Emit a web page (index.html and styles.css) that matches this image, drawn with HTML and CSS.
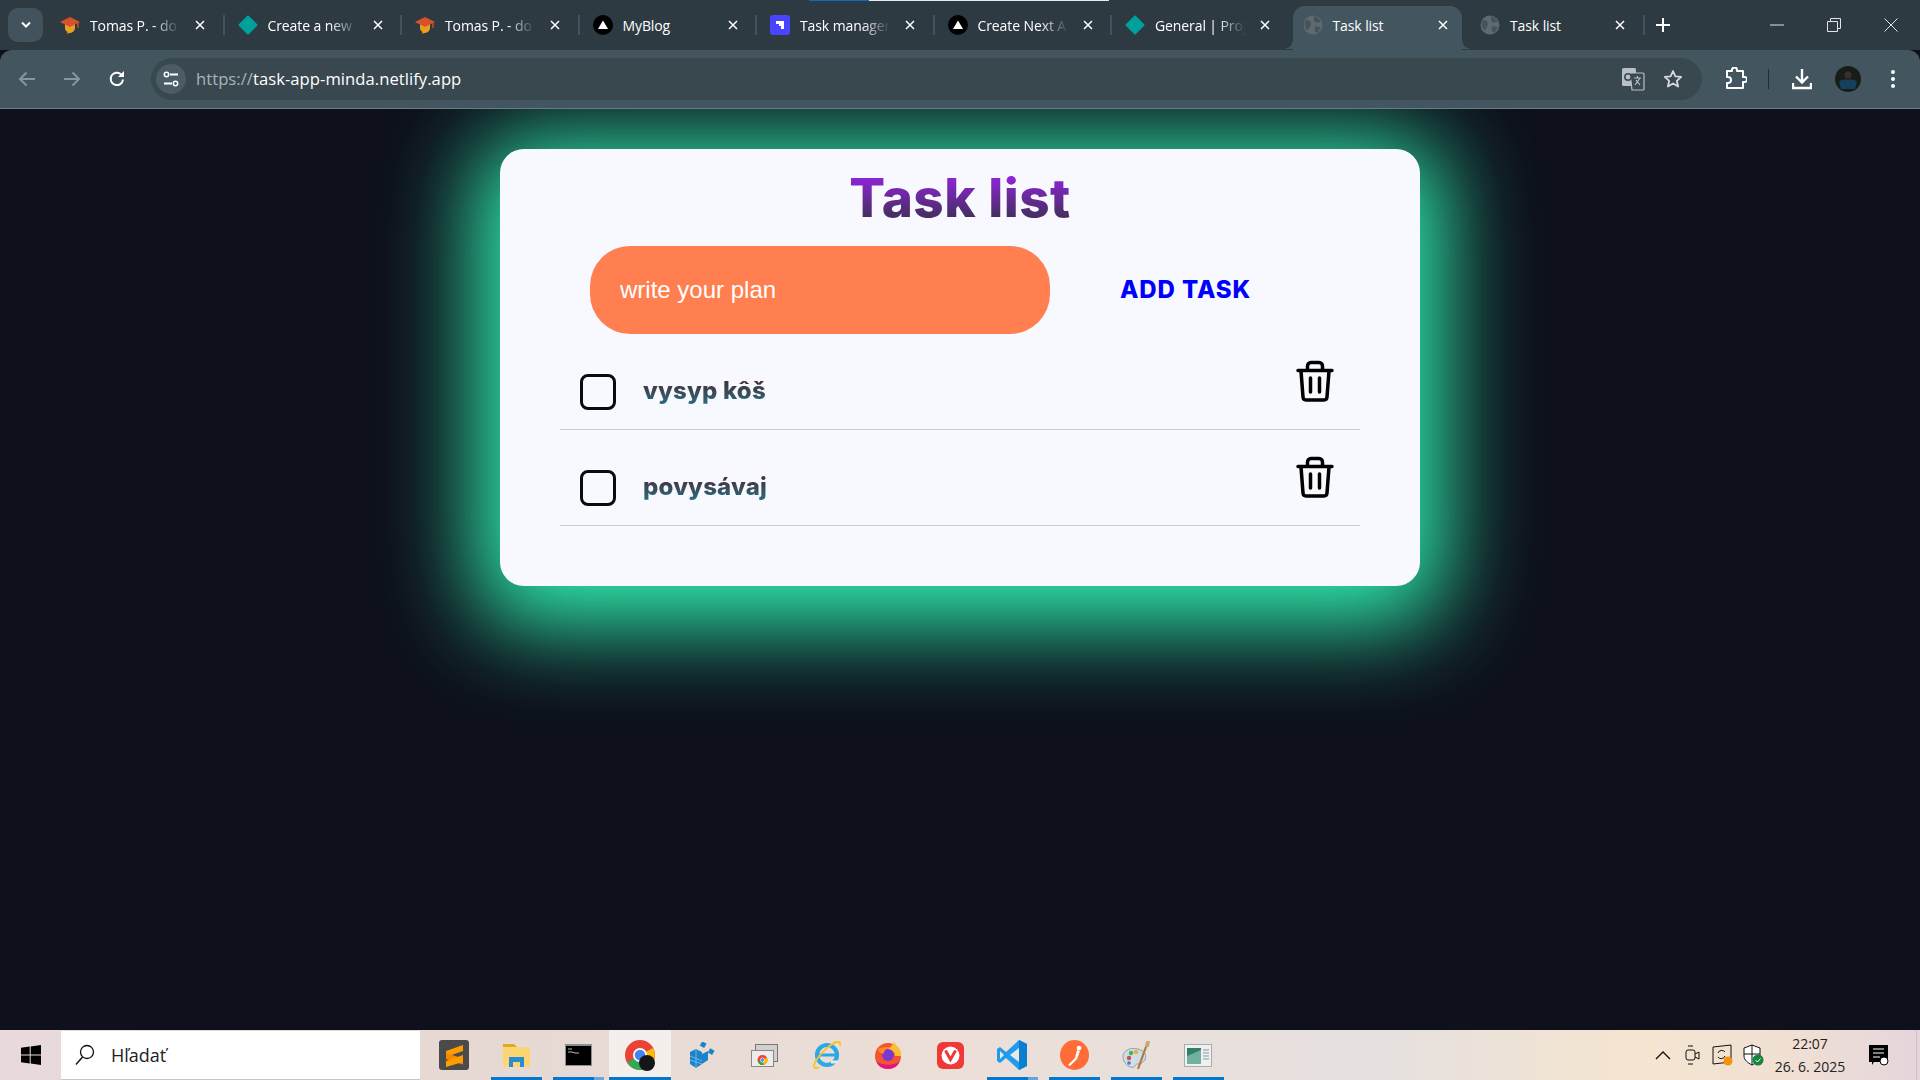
FILE: index.html
```html
<!DOCTYPE html>
<html lang="en">
<head>
    <meta charset="UTF-8">
    <meta name="viewport" content="width=device-width, initial-scale=1.0">
    <title>Task list</title>
    <link rel="stylesheet" href="styles.css">
</head>
<body>
    <svg class="icon-defs" width="0" height="0">
        <symbol id="fav-cap" viewBox="0 0 20 20">
            <path d="M5 9h10v4c0 3-3 5-6 5l-2 1 .5-2C5.500 16 5 14 5 13z" fill="#e8a020"/>
            <path d="M0 7l10-5 10 5-10 5z" fill="#d9512c"/>
            <path d="M18 8v5" stroke="#d9512c" stroke-width="1.300"/>
        </symbol>
        <symbol id="fav-tri" viewBox="0 0 20 20">
            <circle cx="10" cy="10" r="10" fill="#000"/>
            <path d="M10 5.500l5 8.500H5z" fill="#fff"/>
        </symbol>
        <symbol id="fav-globe" viewBox="0 0 18 18">
            <circle cx="9" cy="9" r="8.500" fill="#5f6a70"/>
            <path d="M2 5c3-1 4 0 5 2s-1 3-1 5l-2 2C2 12 1 8 2 5zM10 1c2 1 5 2 6 5l-4 1c-2-1-3-3-2-6zM11 10l5 1-3 5c-2 0-3-1-2-6z" fill="#45535b"/>
        </symbol>
        <symbol id="icon-close" viewBox="0 0 10 10">
            <path d="M1 1l8 8M9 1l-8 8" stroke="#fff" stroke-width="1.500" fill="none"/>
        </symbol>
        <symbol id="icon-trash" viewBox="0 0 38 42">
            <path d="M2 10.500h34M5 11l2 26c.1 2 1.300 3 3 3h18c1.700 0 2.900-1 3-3l2-26M11.500 10V6c0-2 1.500-3.500 3.500-3.500h8c2 0 3.500 1.500 3.500 3.500v4" fill="none" stroke="#000" stroke-width="3.500" stroke-linecap="round" stroke-linejoin="round"/>
            <path d="M14.500 18v14M23.500 18v14" fill="none" stroke="#000" stroke-width="3.500" stroke-linecap="round"/>
        </symbol>
    </svg>

    <header class="tabstrip">
        <span class="bar-progress"></span>
        <button class="tab-search">
            <svg width="12" height="8" viewBox="0 0 12 8"><path d="M2 1.500l4 4 4-4" fill="none" stroke="#fff" stroke-width="2"/></svg>
        </button>
        <div class="tab">
            <svg class="favicon"><use href="#fav-cap"/></svg>
            <span class="tab-title tab-fade">Tomas P. - do</span>
            <svg class="tab-close"><use href="#icon-close"/></svg>
        </div>
        <div class="tab">
            <span class="fav-diamond"></span>
            <span class="tab-title tab-fade">Create a new</span>
            <svg class="tab-close"><use href="#icon-close"/></svg>
        </div>
        <div class="tab">
            <svg class="favicon"><use href="#fav-cap"/></svg>
            <span class="tab-title tab-fade">Tomas P. - do</span>
            <svg class="tab-close"><use href="#icon-close"/></svg>
        </div>
        <div class="tab">
            <svg class="favicon"><use href="#fav-tri"/></svg>
            <span class="tab-title">MyBlog</span>
            <svg class="tab-close"><use href="#icon-close"/></svg>
        </div>
        <div class="tab">
            <svg class="favicon" viewBox="0 0 20 20">
                <rect width="20" height="20" rx="3" fill="#4945ff"/>
                <path d="M6 6h8v8h-3v-3l-2 0V9H6z" fill="#fff"/>
            </svg>
            <span class="tab-title tab-fade">Task manager</span>
            <svg class="tab-close"><use href="#icon-close"/></svg>
        </div>
        <div class="tab">
            <svg class="favicon"><use href="#fav-tri"/></svg>
            <span class="tab-title tab-fade">Create Next A</span>
            <svg class="tab-close"><use href="#icon-close"/></svg>
        </div>
        <div class="tab tab-noline">
            <span class="fav-diamond"></span>
            <span class="tab-title tab-fade">General | Proj</span>
            <svg class="tab-close"><use href="#icon-close"/></svg>
        </div>
        <div class="tab tab-active">
            <svg class="favicon"><use href="#fav-globe"/></svg>
            <span class="tab-title">Task list</span>
            <svg class="tab-close"><use href="#icon-close"/></svg>
        </div>
        <div class="tab">
            <svg class="favicon"><use href="#fav-globe"/></svg>
            <span class="tab-title">Task list</span>
            <svg class="tab-close"><use href="#icon-close"/></svg>
        </div>
        <svg class="tab-new" width="14" height="14" viewBox="0 0 14 14"><path d="M7 0v14M0 7h14" stroke="#fff" stroke-width="2"/></svg>
        <div class="window-controls">
            <svg width="14" height="14" viewBox="0 0 14 14"><path d="M0 7h14" stroke="#dfe3e5"/></svg>
            <svg width="14" height="14" viewBox="0 0 14 14"><path d="M.5 3.500h10v10H.500zM3.500 3.500V.5h10v10h-3" fill="none" stroke="#dfe3e5"/></svg>
            <svg width="14" height="14" viewBox="0 0 14 14"><path d="M.5.5l13 13M13.500.5l-13 13" stroke="#dfe3e5"/></svg>
        </div>
    </header>

    <nav class="toolbar">
        <div class="nav-buttons">
            <svg width="18" height="16" viewBox="0 0 18 16"><path d="M17 8H2M8.500 1.500L2 8l6.500 6.500" fill="none" stroke="#87959d" stroke-width="2"/></svg>
            <svg width="18" height="16" viewBox="0 0 18 16"><path d="M1 8h15M9.500 1.500L16 8l-6.500 6.500" fill="none" stroke="#87959d" stroke-width="2"/></svg>
            <svg width="18" height="18" viewBox="0 0 18 18"><path d="M15 9.500A6.200 6.200 0 1 1 13 4.300L15 6" fill="none" stroke="#fff" stroke-width="2"/><path d="M16 1v6h-6z" fill="#fff"/></svg>
        </div>
        <div class="omnibox">
            <span class="site-settings">
                <svg width="16" height="16" viewBox="0 0 16 16"><path d="M7 3.500h8M1 12.500h8" stroke="#fff" stroke-width="1.800"/><circle cx="3.500" cy="3.500" r="2.200" fill="none" stroke="#fff" stroke-width="1.500"/><circle cx="12.500" cy="12.500" r="2.200" fill="none" stroke="#fff" stroke-width="1.500"/></svg>
            </span>
            <span class="url"><span class="url-scheme">https://</span>task-app-minda.netlify.app</span>
            <svg class="omni-translate" width="24" height="24" viewBox="0 0 24 24">
                <rect x="1" y="1" width="14" height="18" rx="1.500" fill="#b9c0c4"/>
                <path d="M9 6h13a1 1 0 0 1 1 1v15a1 1 0 0 1-1 1H11z" fill="#39474f" stroke="#b9c0c4" stroke-width="1.200"/>
                <circle cx="7" cy="10" r="3.200" fill="none" stroke="#39474f" stroke-width="1.500"/>
                <path d="M13 11h7M16.500 9v2M14 18l5-7M15 13l4 5" stroke="#b9c0c4" stroke-width="1.200" fill="none"/>
            </svg>
            <svg class="omni-star" width="20" height="20" viewBox="0 0 20 20"><path d="M10 2l2.400 5.300 5.800.6-4.400 3.900 1.300 5.700-5.100-3-5.100 3 1.300-5.700L1.800 7.900l5.800-.6z" fill="none" stroke="#d5dadd" stroke-width="1.800" stroke-linejoin="round"/></svg>
        </div>
        <div class="toolbar-actions">
            <svg class="act-ext" width="22" height="24" viewBox="0 0 22 24"><path d="M2 4h5V3a2.500 2.500 0 0 1 5 0v1h6v6h1.500a2.500 2.500 0 0 1 0 5H18v6H2v-5h1a3 3 0 0 0 0-6H2z" fill="none" stroke="#fff" stroke-width="2" stroke-linejoin="round"/></svg>
            <span class="act-sep"></span>
            <svg class="act-down" width="20" height="22" viewBox="0 0 20 22"><path d="M10 1v13M4 8.500l6 6 6-6" fill="none" stroke="#fff" stroke-width="2.400"/><path d="M1 15v5h18v-5" fill="none" stroke="#fff" stroke-width="2.400"/></svg>
            <svg class="act-avatar" width="26" height="26" viewBox="0 0 26 26">
                <circle cx="13" cy="13" r="13" fill="#171d17"/>
                <circle cx="13" cy="9" r="3.500" fill="#3a2e28"/>
                <path d="M4 15c3-2 15-2 18 0l-2 8H6z" fill="#17405e"/>
            </svg>
            <svg class="act-menu" width="6" height="20" viewBox="0 0 6 20"><circle cx="3" cy="3" r="2" fill="#fff"/><circle cx="3" cy="10" r="2" fill="#fff"/><circle cx="3" cy="17" r="2" fill="#fff"/></svg>
        </div>
    </nav>

    <main class="page">
        <section class="card">
            <h1 class="card-title"><span>Task list</span></h1>
            <form class="task-form">
                <input class="task-input" type="text" placeholder="write your plan">
                <button class="task-add" type="button">ADD TASK</button>
            </form>
            <ul class="task-list">
                <li class="task">
                    <input class="task-check" type="checkbox">
                    <span class="task-text">vysyp kôš</span>
                    <svg class="task-delete"><use href="#icon-trash"/></svg>
                </li>
                <li class="task">
                    <input class="task-check" type="checkbox">
                    <span class="task-text">povysávaj</span>
                    <svg class="task-delete"><use href="#icon-trash"/></svg>
                </li>
            </ul>
        </section>
    </main>

    <footer class="taskbar">
        <span class="start">
            <svg width="20" height="20" viewBox="0 0 20 20"><path d="M0 2.800L8.700 1.500v8H0zM9.700 1.400L20 0v9.500H9.700zM0 10.500h8.700v8L0 17.200zM9.700 10.500H20V20L9.700 18.600z" fill="#000"/></svg>
        </span>
        <div class="search">
            <svg width="20" height="22" viewBox="0 0 20 22"><circle cx="12" cy="8" r="6.500" fill="none" stroke="#111" stroke-width="1.300"/><path d="M7.500 13L1 20.500" stroke="#111" stroke-width="1.400"/></svg>
            <span>Hľadať</span>
        </div>
        <div class="task-apps">
            <span class="app">
                <svg width="30" height="30" viewBox="0 0 30 30"><rect width="30" height="30" rx="3" fill="#4a4a4a"/><path d="M24 5L7 11v6l17-6z" fill="#ff9d00"/><path d="M7 13l17 5.500v6L7 19z" fill="#f58a00"/><path d="M24 15v7l-17 5v-6z" fill="#ff9d00"/></svg>
            </span>
            <span class="app app-open">
                <svg width="27" height="23" viewBox="0 0 27 23"><path d="M0 0h11l3 3H0z" fill="#e3a81c"/><rect y="3" width="27" height="20" fill="#fcd672"/><rect x="6" y="13" width="15" height="10" fill="#2a8dd4"/><rect x="10" y="18" width="7" height="5" fill="#fcd672"/></svg>
            </span>
            <span class="app app-open app-split">
                <svg width="27" height="22" viewBox="0 0 27 22"><rect width="27" height="22" fill="#8d8f90"/><rect x="1" y="2" width="25" height="19" fill="#000"/><path d="M3 5h4M3 8h4l3 1h4" stroke="#bbb" fill="none"/></svg>
            </span>
            <span class="app app-open app-active">
                <svg width="34" height="34" viewBox="-2 -2 34 34">
                    <circle cx="15" cy="15" r="15" fill="#ea4335"/>
                    <path d="M15 15L28 8a15 15 0 0 1-9 21.500z" fill="#fbbc05"/>
                    <path d="M15 15l4 14.500A15 15 0 0 1 2 22.500z" fill="#34a853"/>
                    <circle cx="15" cy="15" r="7" fill="#fff"/>
                    <circle cx="15" cy="15" r="5.300" fill="#4285f4"/>
                    <circle cx="22" cy="23" r="8" fill="#14161a"/>
                </svg>
            </span>
            <span class="app">
                <svg width="26" height="27" viewBox="0 0 26 27"><path d="M1 10l6-3 6 3v12l-6 4-6-4zM13 12l6-3v9l-6 4z" fill="#1b83c9"/><path d="M7 7v19M1 14l12 5M1 18l12 4" stroke="#7cc4ee" stroke-width=".8"/><rect x="12" y="0" width="5" height="5" fill="#1b83c9" transform="rotate(30 14 2)"/><rect x="20" y="7" width="5" height="5" fill="#1b83c9" transform="rotate(30 22 9)"/></svg>
            </span>
            <span class="app">
                <svg width="27" height="23" viewBox="0 0 27 23"><rect x="4.500" y=".5" width="22" height="17" fill="#d0d0d0" stroke="#777"/><rect x=".5" y="6.500" width="22" height="16" fill="#ececec" stroke="#888"/><circle cx="11.500" cy="16" r="5" fill="#ea4335"/><path d="M11.500 16l4.500-2.500a5 5 0 0 1-3.500 7.400z" fill="#fbbc05"/><path d="M11.500 16l1 5A5 5 0 0 1 7 18z" fill="#34a853"/><circle cx="11.500" cy="16" r="2" fill="#4285f4" stroke="#fff" stroke-width=".7"/></svg>
            </span>
            <span class="app">
                <svg width="29" height="28" viewBox="0 0 29 28"><circle cx="15" cy="14" r="10" fill="none" stroke="#2aa8e8" stroke-width="4.200"/><path d="M7 12.500h16v3H7z" fill="#2aa8e8"/><path d="M19 19.500h7v3h-7z" fill="#efe7df"/><path d="M28 1C22-1 6 13 2 24c-1 3 2 4 5 2" fill="none" stroke="#f5c52c" stroke-width="1.800"/><path d="M21 2c4-2 8-2 7 3" fill="none" stroke="#f5c52c" stroke-width="1.800"/></svg>
            </span>
            <span class="app">
                <svg width="28" height="28" viewBox="0 0 28 28"><circle cx="14" cy="15" r="13" fill="#f2542d"/><path d="M14 28A13 13 0 0 1 2 20c5 5 19 5 24 0a13 13 0 0 1-12 8z" fill="#e31587"/><path d="M20 0c0 4 8 7 7 15h-6c0-5-4-6-8-6 2-3 7-5 7-9z" fill="#ffbd2e"/><circle cx="14" cy="14" r="6" fill="#7a37d4"/><path d="M4 8c4-2 10-3 14-1-5 0-8 2-8 5 0 1-5 1-6-4z" fill="#ff8a1f"/></svg>
            </span>
            <span class="app">
                <svg width="27" height="27" viewBox="0 0 27 27"><rect width="27" height="27" rx="6" fill="#ef3939"/><circle cx="13.500" cy="13.500" r="9" fill="#fff"/><path d="M9 9.500l4.500 8 4.500-8" fill="none" stroke="#ef3939" stroke-width="3" stroke-linecap="round"/></svg>
            </span>
            <span class="app app-open app-split">
                <svg width="30" height="30" viewBox="0 0 30 30"><path d="M22 0l8 4v22l-8 4-13-12-6 5-3-2v-12l3-2 6 5z" fill="#1f9cf0"/><path d="M22 0l8 4v22l-8 4z" fill="#0a7fd0"/><path d="M22 8v14l-9-7z" fill="#efe7df"/><path d="M3 11v8l4-4z" fill="#efe7df"/></svg>
            </span>
            <span class="app app-open">
                <svg width="29" height="30" viewBox="0 0 29 30"><ellipse cx="14.500" cy="15" rx="14.500" ry="15" fill="#ff6c37"/><circle cx="19" cy="8" r="2.300" fill="#fff"/><path d="M17 10l-2 8-7 7 2 1 7-7 3-8z" fill="#fff"/></svg>
            </span>
            <span class="app app-open">
                <svg width="30" height="29" viewBox="0 0 30 29"><path d="M2 16C2 9 10 6 17 8s10 7 6 12-7 1-9 5-12-1-12-9z" fill="#cfdde6" stroke="#8da4b3"/><circle cx="8" cy="17" r="2.200" fill="#d94a4a"/><circle cx="10" cy="12" r="2.200" fill="#4fae4f"/><circle cx="15" cy="11" r="2.200" fill="#e6b52f"/><circle cx="8" cy="22" r="1.800" fill="#3a7fd0"/><path d="M26 3l-9 25" stroke="#b57a3a" stroke-width="2.200"/><path d="M25 0h4l-1 6h-4z" fill="#c8a878"/></svg>
            </span>
            <span class="app app-open">
                <svg width="28" height="23" viewBox="0 0 28 23"><rect x=".5" y=".5" width="27" height="22" fill="#eef0f1" stroke="#a8acae"/><rect x="3" y="4" width="14" height="16" fill="#2f8067"/><path d="M3 12l14-6v14H3z" fill="#6fb0a0"/><path d="M19 6h6M19 9h6M19 12h6M19 15h6" stroke="#90979b"/></svg>
            </span>
        </div>
        <div class="tray">
            <svg width="16" height="10" viewBox="0 0 16 10"><path d="M1 9l7-7 7 7" fill="none" stroke="#111" stroke-width="1.300"/></svg>
            <svg width="16" height="20" viewBox="0 0 16 20"><rect x="1" y="5" width="9" height="10" rx="2" fill="none" stroke="#111"/><path d="M10 9l4-2v7l-4-2M3 1h5M3 19h5" fill="none" stroke="#111"/></svg>
            <svg width="22" height="22" viewBox="0 0 22 22"><path d="M1 3l18-2v17l-18 2z" fill="none" stroke="#111"/><path d="M6 9a4 4 0 0 1 7-1M13 12a4 4 0 0 1-7 1" fill="none" stroke="#111"/><circle cx="16" cy="17" r="4.500" fill="#f7920f"/></svg>
            <svg width="20" height="22" viewBox="0 0 20 22"><path d="M9 1l8 3v8c0 4-4 7-8 9-4-2-8-5-8-9V4z" fill="#fff" stroke="#111"/><path d="M9 1v20M1 10h16" stroke="#111"/><circle cx="15" cy="16" r="5.500" fill="#14873f"/><path d="M12.500 16l2 2 3-3.500" fill="none" stroke="#fff"/></svg>
        </div>
        <div class="clock">
            <span>22:07</span>
            <span>26. 6. 2025</span>
        </div>
        <svg class="notify" width="22" height="22" viewBox="0 0 22 22"><path d="M1 1h19v17H6l-2 3v-3H1z" fill="#000"/><path d="M5 5h11M5 9h11M5 13h7" stroke="#fff"/><circle cx="16" cy="17" r="4" fill="#fff" stroke="#000"/></svg>
        <span class="show-desktop"></span>
    </footer>
</body>
</html>
```

FILE: styles.css
```css
* {
    box-sizing: border-box;
}
html, body {
    height: 100%;
}
body {
    margin: 0;
    display: flex;
    flex-direction: column;
    height: 100vh;
    overflow: hidden;
    background-color: #0e101b;
    font-family: "Open Sans", "Noto Sans", Arial, sans-serif;
}
.icon-defs {
    position: absolute;
}

/* browser tabs */
.tabstrip {
    position: relative;
    z-index: 2;
    display: flex;
    align-items: center;
    flex: none;
    height: 50px;
    background-color: #2e3a42;
    padding-left: 8px;
}
.bar-progress {
    position: absolute;
    top: 0;
    left: 809px;
    width: 300px;
    height: 1px;
    background: linear-gradient(90deg, #0a6cc8 20%, #e8e8e8 20%);
}
.tab-search {
    flex: none;
    display: flex;
    align-items: center;
    justify-content: center;
    width: 35px;
    height: 34px;
    margin-right: 4px;
    border: none;
    border-radius: 10px;
    background-color: #43535d;
    padding: 0;
}
.tab {
    position: relative;
    flex: none;
    display: flex;
    align-items: center;
    width: 177.500px;
    height: 34px;
    padding-left: 13px;
    color: #fff;
    font-size: 14px;
}
.tab::after {
    content: '';
    position: absolute;
    right: 0;
    top: 7px;
    width: 2px;
    height: 20px;
    background-color: #43535d;
}
.tab-noline::after {
    display: none;
}
.tab-active::before {
    content: '';
    position: absolute;
    z-index: -1;
    left: 3px;
    right: 5px;
    top: -2px;
    height: 45px;
    border-radius: 12px 12px 0 0;
    background-color: #435660;
}
/* the little flares at the foot of the open tab */
.tab-active::after {
    z-index: -1;
    left: -6px;
    right: -4px;
    top: 32px;
    width: auto;
    height: 9px;
    background:
        radial-gradient(circle at 0 0, transparent 8.500px, #435660 9px) left bottom / 9px 9px no-repeat,
        radial-gradient(circle at 100% 0, transparent 8.500px, #435660 9px) right bottom / 9px 9px no-repeat;
}
.favicon {
    flex: none;
    width: 20px;
    height: 20px;
}
.fav-diamond {
    flex: none;
    width: 14px;
    height: 14px;
    margin: 0 3px;
    background-color: #00a09d;
    transform: rotate(45deg);
    border-radius: 1px;
}
.tab-title {
    flex: none;
    width: 95px;
    margin-left: 10px;
    white-space: nowrap;
    letter-spacing: -0.100px;
}
.tab-fade {
    -webkit-mask-image: linear-gradient(90deg, #000 65%, transparent 95%);
    mask-image: linear-gradient(90deg, #000 65%, transparent 95%);
}
.tab-close {
    flex: none;
    width: 10px;
    height: 10px;
    margin-left: 10px;
}
.tab-new {
    flex: none;
    margin-left: 11px;
}
.window-controls {
    display: flex;
    align-items: center;
    gap: 43px;
    margin-left: auto;
    padding-right: 22px;
}

/* toolbar */
.toolbar {
    position: relative;
    z-index: 2;
    flex: none;
    display: flex;
    align-items: center;
    height: 59px;
    padding: 0 0 1px 0;
    border-bottom: 1px solid #6a7b84;
    border-radius: 12px 12px 0 0;
    background-color: #435660;
}
.nav-buttons {
    flex: none;
    display: flex;
    align-items: center;
    gap: 27px;
    width: 151px;
    padding-left: 18px;
}
.omnibox {
    flex: none;
    display: flex;
    align-items: center;
    width: 1551px;
    height: 42px;
    padding-left: 5px;
    border-radius: 21px;
    background-color: #39474f;
}
.site-settings {
    flex: none;
    display: flex;
    align-items: center;
    justify-content: center;
    width: 30px;
    height: 30px;
    border-radius: 50%;
    background-color: #4a5c66;
}
.url {
    margin-left: 10px;
    color: #fff;
    font-size: 16.600px;
    letter-spacing: 0.050px;
}
.url-scheme {
    color: #aab4b9;
}
.omni-translate {
    margin-left: auto;
}
.omni-star {
    margin: 0 19px 0 18px;
}
.toolbar-actions {
    flex: 1;
    display: flex;
    align-items: center;
    padding-left: 23px;
}
.act-sep {
    width: 1px;
    height: 20px;
    margin: 0 0 0 21px;
    background-color: #222c32;
}
.act-down {
    margin-left: 23px;
}
.act-avatar {
    margin-left: 23px;
}
.act-menu {
    margin-left: 29px;
}

/* page */
.page {
    flex: 1;
    min-height: 0;
    padding-top: 40px;
    overflow: hidden;
}
.card {
    width: 920px;
    height: 437px;
    margin: 0 auto;
    padding: 0 60px;
    border-radius: 24px;
    background-color: #f8f9ff;
    box-shadow: 0 15px 90px 25px #2ff0b0;
}
.card-title {
    margin: 0;
    padding-top: 13px;
    height: 97px;
    text-align: center;
    font-family: Inter, "Open Sans", sans-serif;
    font-size: 53px;
    font-weight: 800;
    letter-spacing: 0.500px;
    line-height: 72px;
}
.card-title span {
    background: linear-gradient(180deg, #9124dc 15%, #3f2f55 85%);
    -webkit-background-clip: text;
    background-clip: text;
    color: transparent;
}
.task-form {
    display: flex;
    align-items: center;
    padding-left: 30px;
}
.task-input {
    flex: none;
    width: 460px;
    height: 88px;
    padding: 0 30px;
    border: none;
    outline: none;
    border-radius: 40px;
    background-color: #ff7f50;
    color: #fff;
    font-family: "Liberation Sans", Arial, sans-serif;
    font-size: 24px;
}
.task-input::placeholder {
    color: #fff;
    opacity: 1;
}
.task-add {
    margin-left: 70px;
    padding: 0;
    border: none;
    background: none;
    color: #0000ff;
    font-family: Inter, "Open Sans", sans-serif;
    font-size: 24px;
    font-weight: 800;
    letter-spacing: 0.900px;
    line-height: 30px;
}
.task-list {
    margin: 0;
    padding: 0;
    list-style: none;
}
.task {
    display: flex;
    align-items: center;
    height: 96px;
    padding: 19px 26px 0 20px;
    border-bottom: 1px solid #cccccc;
}
.task-check {
    flex: none;
    appearance: none;
    width: 36px;
    height: 36px;
    margin: 2px 0 0;
    border: 3px solid #0b0b0b;
    border-radius: 8px;
    background: none;
}
.task-text {
    margin-left: 27px;
    background: linear-gradient(180deg, #46303a 25%, #2a6a7a 85%);
    -webkit-background-clip: text;
    background-clip: text;
    color: transparent;
    font-family: Inter, "Open Sans", sans-serif;
    font-size: 24px;
    font-weight: 800;
    letter-spacing: 0.200px;
    line-height: 34px;
}
.task-delete {
    flex: none;
    width: 38px;
    height: 42px;
    margin-left: auto;
    margin-bottom: 20px;
}

/* windows taskbar */
.taskbar {
    position: relative;
    z-index: 2;
    flex: none;
    display: flex;
    align-items: center;
    height: 50px;
    background: linear-gradient(90deg, #e8d9dc 0%, #e6d8d2 25%, #ecdfd8 50%, #e5e0df 72%, #f5e5d0 85%, #f0e0d3 93%, #e5d5dc 100%);
}
.start {
    flex: none;
    display: flex;
    justify-content: center;
    width: 61px;
}
.search {
    flex: none;
    display: flex;
    align-items: center;
    width: 359px;
    height: 49px;
    margin-top: 1px;
    padding-left: 14px;
    background-color: #fff;
    border-bottom: 1px solid #c8c8c8;
    color: #222;
    font-size: 18px;
}
.search span {
    margin-left: 16px;
}
.task-apps {
    flex: none;
    display: flex;
    margin-left: 3px;
}
.app {
    position: relative;
    flex: none;
    display: flex;
    align-items: center;
    justify-content: center;
    width: 62px;
    height: 50px;
}
.app-active {
    background-color: #f4efec;
}
.app-open::after {
    content: '';
    position: absolute;
    left: 6px;
    right: 5px;
    bottom: 0;
    height: 3px;
    background-color: #0078d4;
}
.app-active::after {
    left: 0;
    right: 0;
}
.app-split::after {
    background: linear-gradient(90deg, #0078d4 80%, #62a8e0 80%);
}
.tray {
    display: flex;
    align-items: center;
    margin-left: auto;
}
.tray svg {
    flex: none;
    width: 30px;
}
.clock {
    display: flex;
    flex-direction: column;
    align-items: center;
    gap: 1px;
    width: 76px;
    margin-left: 4px;
    color: #222;
    font-size: 14px;
    line-height: 22px;
}
.notify {
    margin-left: 20px;
}
.show-desktop {
    width: 1px;
    height: 50px;
    margin: 0 3px 0 26px;
    background-color: #cbbfc4;
}
```
